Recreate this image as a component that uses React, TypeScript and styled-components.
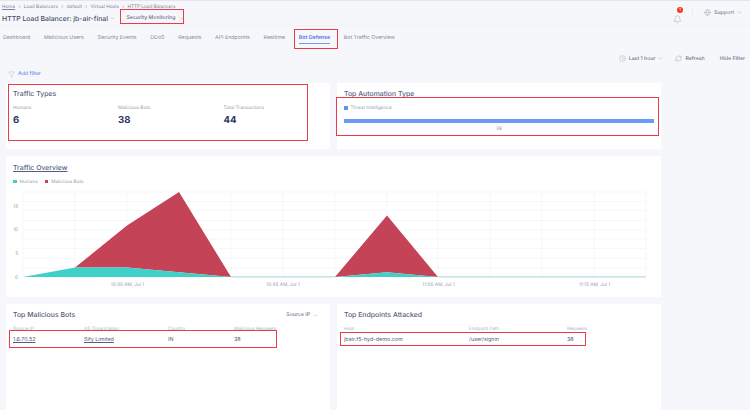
import React from "react";
import styled, { createGlobalStyle } from "styled-components";
import { Bell, ChevronDown, Clock, Filter, Globe, RefreshCw } from "lucide-react";

const Global = createGlobalStyle`
  html, body { margin: 0; padding: 0; background: #f6f7fa; }
  body { font-family: Inter, "Liberation Sans", sans-serif; color: #3c4568; text-rendering: geometricPrecision; }
  * { box-sizing: border-box; }
`;

const Page = styled.div`
  position: relative;
  width: 750px;
  height: 410px;
  overflow: hidden;
  background: #f6f7fa;
  border-top: 1px solid #e4e6ec;
`;

const Header = styled.header`
  height: 25px;
  padding: 3px 8px 0 2px;
  display: flex;
  justify-content: space-between;
  border-bottom: 1px solid #f1f2f5;
`;

const HeaderLeft = styled.div`
  display: flex;
  flex-direction: column;
  gap: 1px;
`;

const Breadcrumbs = styled.nav`
  display: flex;
  align-items: center;
  gap: 3.4px;
  height: 6px;
  font-size: 4.7px;
  color: #7d8399;
`;

const Crumb = styled.span<{ $link?: boolean }>`
  text-decoration: ${(p) => (p.$link ? "underline" : "none")};
`;

const TitleRow = styled.div`
  display: flex;
  align-items: center;
  height: 15px;
`;

const Title = styled.h1`
  margin: 0;
  font-size: 6.9px;
  font-weight: 500;
  color: #474f70;
  white-space: nowrap;
`;

const Chevron = styled(ChevronDown)`
  color: #8d93a8;
  flex: none;
`;

const TitleChevron = styled(Chevron)`
  margin-left: 2px;
`;

const SectionLabel = styled.div`
  display: flex;
  align-items: center;
  margin-left: 11.5px;
  gap: 4px;
  font-size: 5.2px;
  font-weight: 500;
  color: #656c88;
  white-space: nowrap;
`;

const HeaderRight = styled.div`
  display: flex;
  align-items: center;
  height: 17px;
`;

const BellWrap = styled.div`
  position: relative;
  width: 10px;
  height: 11px;
  margin-top: 2px;
  color: #a4a9ba;
`;

const Badge = styled.span`
  position: absolute;
  top: -1.5px;
  left: 4px;
  width: 6px;
  height: 6px;
  border-radius: 50%;
  background: #f5391f;
  color: #fff;
  font-size: 4px;
  line-height: 6px;
  text-align: center;
`;

const Divider = styled.span`
  width: 1px;
  height: 9px;
  margin: 0 11px 0 9px;
  background: #eceef2;
`;

const Support = styled.div`
  display: flex;
  align-items: center;
  gap: 3px;
  font-size: 5.2px;
  font-weight: 500;
  color: #767c94;
`;

const SupportIcon = styled(Globe)`
  color: #9a9fb2;
`;

const Tabs = styled.nav`
  display: flex;
  align-items: flex-start;
  height: 20px;
  padding: 7.5px 0 0 3px;
  gap: 13.7px;
`;

const Tab = styled.span<{ $active?: boolean }>`
  position: relative;
  height: 10px;
  font-size: 5.3px;
  line-height: 8px;
  font-weight: ${(p) => (p.$active ? 600 : 400)};
  color: ${(p) => (p.$active ? "#5575ea" : "#858aa0")};
  border-bottom: ${(p) => (p.$active ? "1px solid #7d97ef" : "none")};
  white-space: nowrap;
`;

const Toolbar = styled.div`
  display: flex;
  justify-content: flex-end;
  align-items: center;
  height: 17px;
  margin-top: 4px;
  padding-right: 5px;
  gap: 12px;
  font-size: 5.2px;
  font-weight: 500;
  color: #6d7390;
`;

const ToolItem = styled.span`
  display: flex;
  align-items: center;
  gap: 3px;
`;

const HideFilter = styled(ToolItem)`
  margin-left: 3px;
`;

const ToolIcon = styled.span`
  display: flex;
  color: #8b91a6;
`;

const FilterRow = styled.div`
  display: flex;
  align-items: center;
  gap: 3px;
  height: 10px;
  margin-top: 2px;
  padding-left: 8px;
  font-size: 5.2px;
  font-weight: 500;
  color: #6f8bf0;
`;

const FilterIcon = styled(Filter)`
  color: #a9aebf;
`;

const Grid = styled.main`
  display: grid;
  grid-template-columns: 324px 324px;
  grid-template-rows: 66px 141px 106px;
  gap: 7px;
  width: 655px;
  margin: 4px 0 0 6px;
  padding: 0;
`;

const Card = styled.section`
  background: #fff;
  min-width: 0;
  padding: 6px 7px 0;
`;

const WideCard = styled(Card)`
  grid-column: 1 / span 2;
  padding: 7px 0 0;
`;

const CardTitle = styled.h2<{ $underline?: boolean }>`
  margin: 0;
  height: 10px;
  font-size: 6.9px;
  line-height: 10px;
  font-weight: 500;
  color: #565d7c;
  text-decoration: ${(p) => (p.$underline ? "underline" : "none")};
`;

const WideTitle = styled(CardTitle)`
  margin-left: 7px;
`;

const Stats = styled.div`
  display: grid;
  grid-template-columns: 105px 105.5px 1fr;
  margin-top: 5.5px;
`;

const StatLabel = styled.div`
  font-size: 4.7px;
  line-height: 7px;
  color: #989db0;
`;

const StatValue = styled.div`
  margin-top: 3px;
  font-size: 9.6px;
  line-height: 12px;
  font-weight: 700;
  color: #2b3563;
`;

const Legend = styled.div`
  display: flex;
  align-items: center;
  gap: 7px;
  margin-top: 5.5px;
  height: 7px;
`;

const WideLegend = styled(Legend)`
  margin: 5px 0 0 7px;
`;

const LegendItem = styled.span`
  display: flex;
  align-items: center;
  gap: 3px;
  font-size: 4.7px;
  color: #989db0;
`;

const Swatch = styled.i<{ $color: string }>`
  width: 3.5px;
  height: 3.5px;
  background: ${(p) => p.$color};
`;

const Bar = styled.div`
  height: 3.5px;
  margin: 7.5px 0 0;
  background: #6b9bf5;
`;

const BarValue = styled.div`
  margin-top: 3.5px;
  font-size: 4.7px;
  line-height: 6px;
  text-align: center;
  color: #989db0;
`;

const ChartSvg = styled.svg`
  display: block;
  margin-top: 1px;
`;

const AxisText = styled.text`
  font-family: Inter, "Liberation Sans", sans-serif;
  font-size: 4.7px;
  fill: #989db0;
`;

const TitleBar = styled.div`
  display: flex;
  align-items: center;
  justify-content: space-between;
  padding-right: 5px;
`;

const Select = styled.span`
  display: flex;
  align-items: center;
  gap: 3px;
  font-size: 5.2px;
  font-weight: 500;
  color: #767c94;
`;

const Table = styled.div<{ $cols: string }>`
  display: grid;
  grid-template-columns: ${(p) => p.$cols};
  margin-top: 6px;
  font-size: 5.4px;
`;

const Th = styled.div`
  font-size: 4.6px;
  line-height: 7px;
  color: #b0b4c3;
  white-space: nowrap;
`;

const Td = styled.div<{ $link?: boolean }>`
  margin-top: 3px;
  line-height: 9px;
  font-weight: 400;
  color: #565d7c;
  text-decoration: ${(p) => (p.$link ? "underline" : "none")};
  white-space: nowrap;
`;

const Highlight = styled.div<{ $x: number; $y: number; $w: number; $h: number }>`
  position: absolute;
  left: ${(p) => p.$x}px;
  top: ${(p) => p.$y}px;
  width: ${(p) => p.$w}px;
  height: ${(p) => p.$h}px;
  border: 1.4px solid #ea3b4a;
  pointer-events: none;
`;

const crumbs = ["Load Balancers", "default", "Virtual Hosts"];
const tabs = ["Dashboard", "Malicious Users", "Security Events", "DDoS", "Requests", "API Endpoints", "Realtime", "Bot Defense", "Bot Traffic Overview"];
const gridX = [23, 75, 127, 179, 231, 283, 335, 387, 438, 490, 542, 594, 646];
const gridY = [192, 201.5, 210.5, 220.5, 230, 239, 248.5, 258.5, 268];

function TrafficChart() {
  return (
    <ChartSvg width={655} height={106} viewBox="6 186 655 106" role="img" aria-label="Traffic overview chart">
      {gridY.map((y) => (
        <line key={y} x1={23} x2={646} y1={y} y2={y} stroke="#f2f3f6" strokeWidth={0.7} />
      ))}
      {gridX.map((x) => (
        <line key={x} x1={x} x2={x} y1={192} y2={277} stroke="#f2f3f6" strokeWidth={0.7} />
      ))}
      <polygon points="75,267.6 127,225.5 179,192 231,277 179,272.3 127,267.6" fill="#c44356" />
      <polygon points="335,277 387,215.5 438,277 387,272.3" fill="#c44356" />
      <polygon points="23,277 75,267.6 127,267.6 179,272.3 231,277" fill="#3fd0c9" />
      <polygon points="335,277 387,272.3 438,277" fill="#3fd0c9" />
      <rect x={231} y={276} width={104} height={1.6} fill="#c6e6e4" />
      <rect x={438} y={276} width={208} height={1.6} fill="#c6e6e4" />
      {[
        ["15", 206],
        ["10", 229.5],
        ["5", 253],
        ["0", 277],
      ].map(([t, y]) => (
        <AxisText key={t} x={18} y={Number(y) + 1.8} textAnchor="end">
          {t}
        </AxisText>
      ))}
      {[
        ["10:30 AM, Jul 1", 127.5],
        ["10:45 AM, Jul 1", 283],
        ["11:00 AM, Jul 1", 438.5],
        ["11:15 AM, Jul 1", 594.5],
      ].map(([t, x]) => (
        <AxisText key={t} x={Number(x)} y={286} textAnchor="middle">
          {t}
        </AxisText>
      ))}
    </ChartSvg>
  );
}

export default function App() {
  return (
    <Page>
      <Global />
      <Header>
        <HeaderLeft>
          <Breadcrumbs>
            <Crumb $link>Home</Crumb>
            <span>›</span>
            {crumbs.map((c) => (
              <React.Fragment key={c}>
                <Crumb>{c}</Crumb>
                <span>›</span>
              </React.Fragment>
            ))}
            <Crumb $link>HTTP Load Balancers</Crumb>
          </Breadcrumbs>
          <TitleRow>
            <Title>HTTP Load Balancer: jb-air-final</Title>
            <TitleChevron size={5} />
            <SectionLabel>
              Security Monitoring
              <Chevron size={5} />
            </SectionLabel>
          </TitleRow>
        </HeaderLeft>
        <HeaderRight>
          <BellWrap>
            <Bell size={9} strokeWidth={1.3} />
            <Badge>1</Badge>
          </BellWrap>
          <Divider />
          <Support>
            <SupportIcon size={7} strokeWidth={1.3} />
            Support
            <Chevron size={5} />
          </Support>
        </HeaderRight>
      </Header>
      <Tabs>
        {tabs.map((t) => (
          <Tab key={t} $active={t === "Bot Defense"}>
            {t}
          </Tab>
        ))}
      </Tabs>
      <Toolbar>
        <ToolItem>
          <ToolIcon>
            <Clock size={7} strokeWidth={1.2} />
          </ToolIcon>
          Last 1 hour
          <Chevron size={5} />
        </ToolItem>
        <ToolItem>
          <ToolIcon>
            <RefreshCw size={7} strokeWidth={1.2} />
          </ToolIcon>
          Refresh
        </ToolItem>
        <HideFilter>Hide Filter</HideFilter>
      </Toolbar>
      <FilterRow>
        <FilterIcon size={7} strokeWidth={1.2} />
        Add filter
      </FilterRow>
      <Grid>
        <Card>
          <CardTitle>Traffic Types</CardTitle>
          <Stats>
            <div>
              <StatLabel>Humans</StatLabel>
              <StatValue>6</StatValue>
            </div>
            <div>
              <StatLabel>Malicious Bots</StatLabel>
              <StatValue>38</StatValue>
            </div>
            <div>
              <StatLabel>Total Transactions</StatLabel>
              <StatValue>44</StatValue>
            </div>
          </Stats>
        </Card>
        <Card>
          <CardTitle>Top Automation Type</CardTitle>
          <Legend>
            <LegendItem>
              <Swatch $color="#5b93f5" />
              Threat Intelligence
            </LegendItem>
          </Legend>
          <Bar />
          <BarValue>38</BarValue>
        </Card>
        <WideCard>
          <WideTitle $underline>Traffic Overview</WideTitle>
          <WideLegend>
            <LegendItem>
              <Swatch $color="#3fd0c9" />
              Humans
            </LegendItem>
            <LegendItem>
              <Swatch $color="#c44356" />
              Malicious Bots
            </LegendItem>
          </WideLegend>
          <TrafficChart />
        </WideCard>
        <Card>
          <TitleBar>
            <CardTitle>Top Malicious Bots</CardTitle>
            <Select>
              Source IP
              <Chevron size={5} />
            </Select>
          </TitleBar>
          <Table $cols="71px 84px 66px 1fr">
            <Th>Source IP</Th>
            <Th>AS Organization</Th>
            <Th>Country</Th>
            <Th>Malicious Requests</Th>
            <Td $link>1.6.70.52</Td>
            <Td $link>Sify Limited</Td>
            <Td>IN</Td>
            <Td>38</Td>
          </Table>
        </Card>
        <Card>
          <CardTitle>Top Endpoints Attacked</CardTitle>
          <Table $cols="125px 98px 1fr">
            <Th>Host</Th>
            <Th>Endpoint Path</Th>
            <Th>Requests</Th>
            <Td>jbair.f5-hyd-demo.com</Td>
            <Td>/user/signin</Td>
            <Td>38</Td>
          </Table>
        </Card>
      </Grid>
      <Highlight $x={119.5} $y={8} $w={64} $h={14.5} />
      <Highlight $x={293.5} $y={28} $w={44} $h={20} />
      <Highlight $x={8} $y={83} $w={300} $h={57} />
      <Highlight $x={336} $y={95.5} $w={323} $h={39} />
      <Highlight $x={9} $y={329} $w={268} $h={18} />
      <Highlight $x={339.5} $y={331} $w={246.5} $h={14} />
    </Page>
  );
}
